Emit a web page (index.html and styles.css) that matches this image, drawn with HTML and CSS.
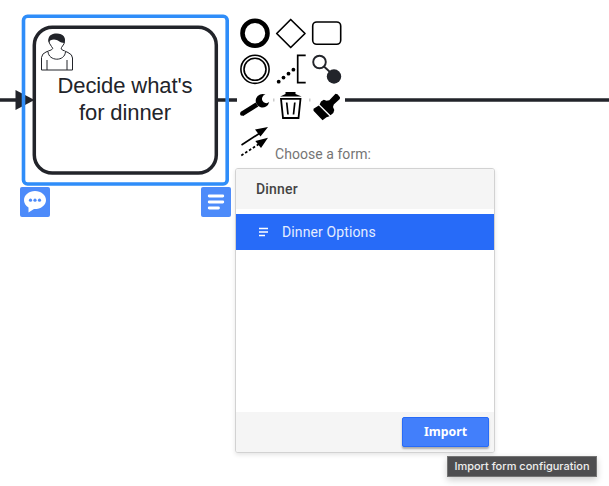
FILE: index.html
```html
<!DOCTYPE html>
<html lang="en">
<head>
<meta charset="utf-8">
<title>Modeler</title>
<link rel="stylesheet" href="styles.css">
</head>
<body>
<main class="canvas">
  <svg class="diagram" width="609" height="486" viewBox="0 0 609 486">
    <path class="flow" d="M0 100H22M218 100H609"/>
    <rect class="task" x="34.3" y="27.3" width="182" height="145.7" rx="18"/>
    <path class="marker" d="M15.5 90V110L34.5 100Z"/>
    <g class="user">
      <path d="M41.5 70V57.500Q42 53.500 46 52L51.500 49.800Q54 48.500 51.500 46.500Q48.500 43 49 40Q50 34.500 56.500 34.500Q63.500 34.500 64.500 40Q65 44 61.500 47.500Q60 49 63 50.300L68 52.500Q72.500 54.500 72.500 58V70Z"/>
      <path d="M48 51.500C48.500 61.500 65 62 65.500 51.500M47 60V70M67 60V70"/>
      <path class="hair" d="M48.500 42.500C47.500 36 51 33.500 57 33.500C63 33.500 66 37 64.500 43C60 43 58 39.500 54 39.500Q50 39.500 48.500 42.500Z"/>
    </g>
    <text class="label" x="125" y="93" textLength="135">Decide what's</text>
    <text class="label" x="125" y="120" textLength="92">for dinner</text>
    <rect class="selection" x="23.500" y="16.300" width="203.700" height="167.700" rx="4"/>
  </svg>

  <span class="badge comment">
    <svg width="30" height="30" viewBox="0 0 30 30"><path fill="#fff" d="M15 4C9 4 4 8 4 13.200Q4 17.500 8.500 20.500V25.500L14 22C20.500 22.200 26 18.500 26 13.200C26 8 21 4 15 4Z"/><g fill="#4d8bfa"><circle cx="10.500" cy="13.200" r="1.600"/><circle cx="15" cy="13.200" r="1.600"/><circle cx="19.500" cy="13.200" r="1.600"/></g></svg>
  </span>
  <span class="badge form">
    <svg width="30" height="30" viewBox="0 0 30 30"><path d="M8.200 9H21.800M8.200 15H21.800M8.200 21H17.500" stroke="#fff" stroke-width="2.800" stroke-linecap="round"/></svg>
  </span>

  <div class="context-pad">
    <svg viewBox="0 0 36 36"><circle cx="18" cy="18.300" r="12.500" stroke-width="4.600"/></svg>
    <svg viewBox="0 0 36 36"><path d="M17.700 4.500L32 18.500L17.700 32.500L3.700 18.500Z" stroke-width="1.700" stroke-linejoin="round"/></svg>
    <svg viewBox="0 0 36 36"><rect x="3.700" y="7" width="28" height="22.300" rx="4" stroke-width="1.600"/></svg>
    <svg viewBox="0 0 36 36"><g stroke-width="1.600"><circle cx="18" cy="18.300" r="14.100"/><circle cx="18" cy="18.300" r="11"/></g></svg>
    <svg viewBox="0 0 36 36"><path d="M32.700 4.300H24.700V31.700H32.700" stroke-width="1.700"/><g class="solid"><circle cx="5.700" cy="30.700" r="1.900"/><circle cx="10.500" cy="26.600" r="1.900"/><circle cx="15.500" cy="22.700" r="1.900"/><circle cx="20.400" cy="18.700" r="1.900"/></g></svg>
    <svg viewBox="0 0 36 36" class="connect"><circle cx="10.500" cy="11" r="6.300" stroke-width="1.900"/><path d="M15 15.500L22 22" stroke-width="1.800"/><circle class="solid" cx="25" cy="25.500" r="7.200"/></svg>
    <svg viewBox="0 0 36 36"><path d="M4.800 27L20 17.500" stroke-width="5"/><circle class="solid" cx="5" cy="26.800" r="2"/><path class="solid" d="M28.500 7.600A6.800 6.800 0 1 0 32.200 15A4.300 4.300 0 1 1 28.500 7.600Z"/></svg>
    <svg viewBox="0 0 36 36"><path class="gap" d="M0 13H1.500"/><path class="solid" d="M7.200 9.500L12.500 7V5H22.500V7L28.700 9.500Z"/><path d="M8 11.800H27.500L25.500 31H10Z" stroke-width="1.800"/><path d="M13.700 15.500L15 27.500M21.800 15.500L20.500 27.500" stroke-width="1.700"/></svg>
    <svg viewBox="0 0 36 36"><path class="gap" d="M0 13H1.500"/><path class="solid" d="M9.800 18.500L20.500 29.200L17.500 30.200L13.500 33.200L4.500 23.800V21.800ZM10.600 17.600L12 14.500L14.800 12.800L17.500 13.800L20.300 13.200L26.500 6.800L28.500 7.300L31 10.200L30.800 12L24.800 17.500L24 20L25.300 23L24.300 26L21.500 28.300Z"/></svg>
    <svg viewBox="0 0 36 36"><path d="M4.500 22L23 10" stroke-width="1.700"/><path d="M4.300 32.500L22 21" stroke-width="1.700" stroke-dasharray="2.600 2"/><path class="solid" d="M31 4L18 6.500L23.500 13.500ZM31 14.700L18.300 18L24 25Z"/></svg>
  </div>

  <section class="picker">
    <h2 class="caption">Choose a form:</h2>
    <div class="panel">
      <header class="project">Dinner</header>
      <div class="option">
        <svg width="10" height="10" viewBox="0 0 10 10"><path d="M0 1.500H9M0 5H9M0 8.500H6" stroke="#fff" stroke-width="1.300"/></svg>
        <span>Dinner Options</span>
      </div>
      <footer class="actions"><button class="import">Import</button></footer>
    </div>
  </section>
  <div class="tooltip"><span>Import form configuration</span></div>
</main>
</body>
</html>
```

FILE: styles.css
```css
* { box-sizing: border-box; }
body { margin: 0; background: #fff; }
.canvas { position: relative; width: 609px; height: 486px; overflow: hidden; font-family: Roboto, "Noto Sans", sans-serif; }
.diagram { display: block; }
.flow { stroke: #22242a; stroke-width: 3.4; }
.marker, .hair { fill: #22242a; }
.task { fill: #fff; stroke: #22242a; stroke-width: 3.5; }
.selection { fill: none; stroke: #2f8df9; stroke-width: 3.6; }
.user { fill: #fff; stroke: #22242a; stroke-width: 1; }
.user .hair { fill: #22242a; stroke: none; }
.label { font: 22px "Liberation Sans", Arial, sans-serif; fill: #22242a; text-anchor: middle; }

.badge { position: absolute; width: 30px; height: 30px; border-radius: 2px; background: #4d8bfa; }
.badge svg { display: block; }
.comment { left: 20px; top: 187px; }
.form { left: 201px; top: 187px; }

.context-pad { position: absolute; left: 237px; top: 15px; display: grid; grid-template-columns: repeat(3, 36px); grid-auto-rows: 36px; }
.context-pad svg { width: 36px; height: 36px; fill: none; stroke: #000; background: #fff; }
.context-pad .solid { fill: #000; stroke: none; }
.context-pad .gap { stroke: #ccc; stroke-width: 3; }
.context-pad .connect { stroke: #22242a; }
.context-pad .connect .solid { fill: #22242a; }

.picker { position: absolute; left: 235px; top: 145px; width: 260px; }
.caption { margin: 0 0 5px 40px; font-size: 14px; line-height: 18px; font-weight: 400; letter-spacing: .05px; color: #757575; }
.panel { display: flex; flex-direction: column; height: 285px; border: 1px solid #d2d2d2; border-radius: 3px; overflow: hidden; background: #fff; box-shadow: 0 2px 4px rgba(0, 0, 0, .1); }
.project { height: 40px; padding-left: 20px; line-height: 40px; font-size: 14px; font-weight: 500; letter-spacing: .2px; color: #444; background: #f5f5f5; }
.option { display: flex; align-items: center; gap: 13px; height: 36px; margin-top: 5px; padding-left: 23px; font-size: 14px; letter-spacing: .12px; color: #e4edff; background: #276bf8; }
.actions { display: flex; justify-content: flex-end; height: 40px; margin-top: auto; padding: 5px 5px 0 0; background: #f5f5f5; }
.import { width: 87px; height: 30px; padding: 0; border: 1px solid #276bf8; border-radius: 2px; font: 700 12.3px/26px "Noto Sans", sans-serif; color: #fff; background: #427ffb; box-shadow: 0 2px 2px rgba(0, 0, 0, .3); }
.tooltip { position: absolute; left: 447px; top: 456px; width: 150px; height: 21px; border: 1px solid #747474; background: #4e4e50; box-shadow: 0 3px 7px rgba(0, 0, 0, .2); text-align: center; font: 500 11px/19px Inter, sans-serif; color: #eee; white-space: nowrap; }
```
